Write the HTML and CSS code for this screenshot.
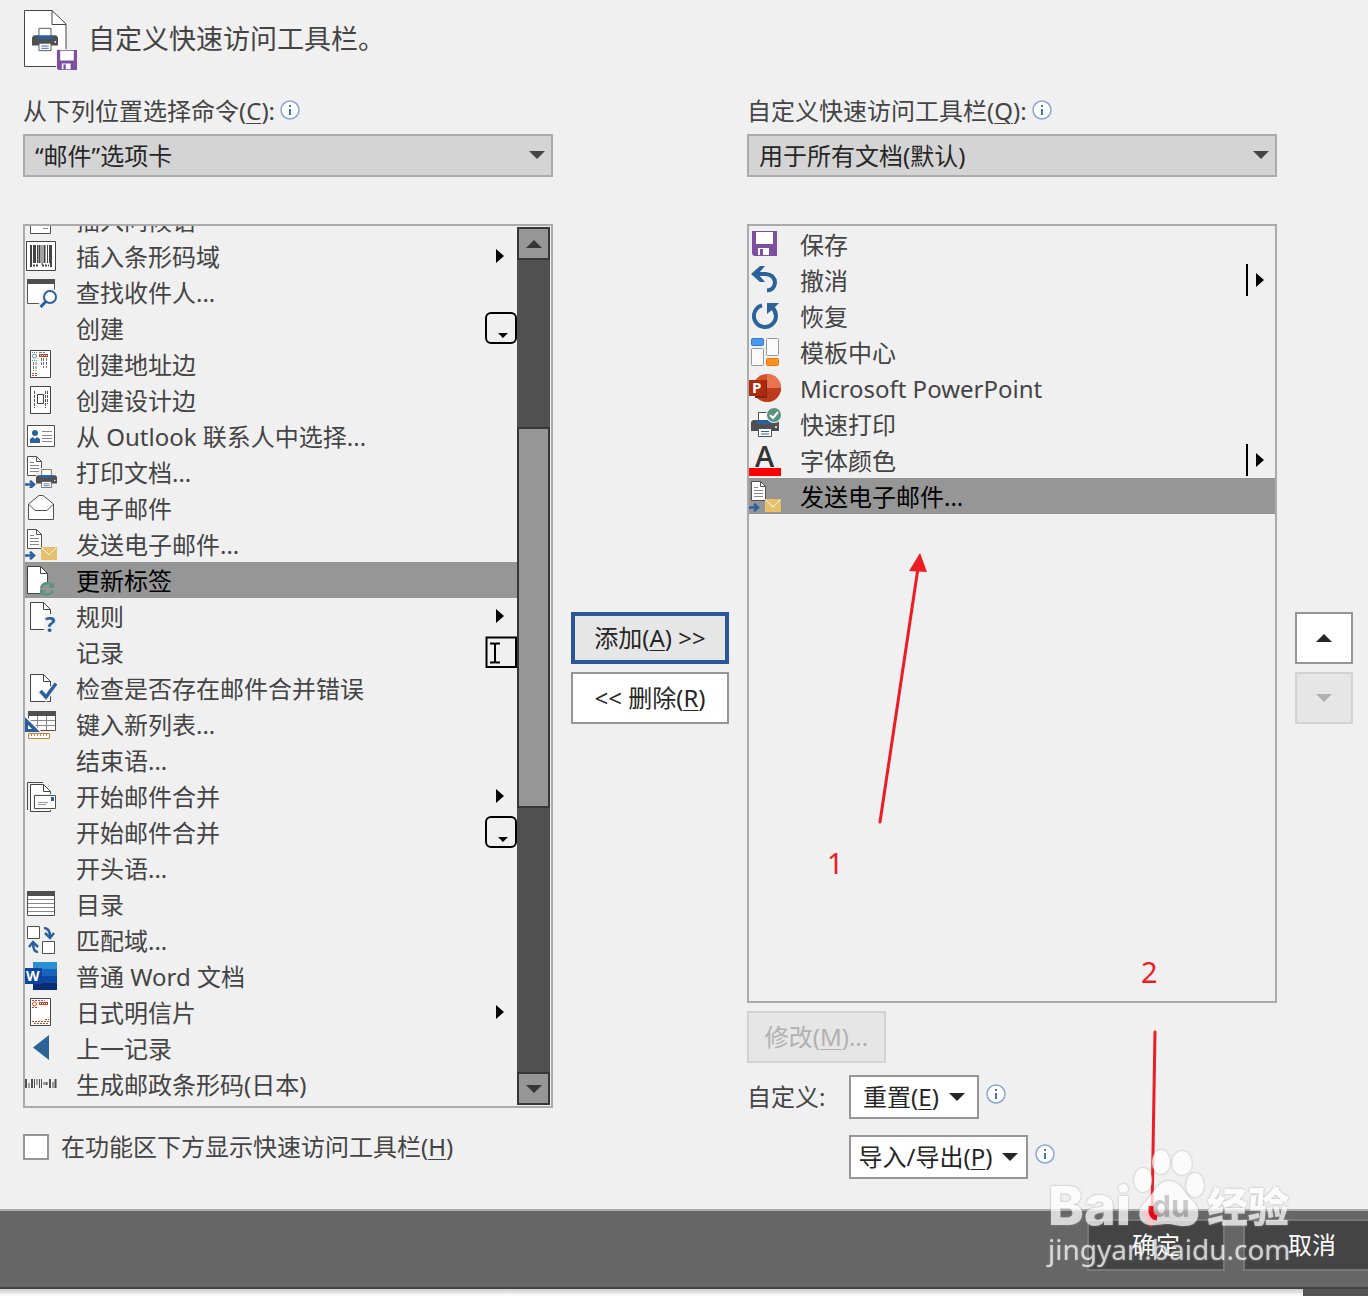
FILE: index.html
```html
<!DOCTYPE html>
<html lang="zh-Hans">
<head>
  <meta charset="UTF-8">
  <meta name="viewport" content="width=device-width, initial-scale=1.0">
  <title>自定义快速访问工具栏</title>
  <link rel="stylesheet" href="styles.css">
</head>
<body>
  <svg class="sprite" aria-hidden="true">
    <!-- shared parts -->
    <symbol id="page" viewBox="0 0 21 28"><path d="M.5 .5H13.500L20.500 7.500V27.500H.5z" fill="#fff" stroke="#444"/><path d="M13.500 .5V7.500H20.500" fill="none" stroke="#444"/></symbol>
    <symbol id="printer" viewBox="0 0 28 25">
      <path d="M2 8H26L28 10V19H0V10z" fill="#505050"/>
      <path d="M7.500 .5H20.500V9H7.500z" fill="#fff" stroke="#505050"/>
      <path d="M6 8H22V12H6z" fill="#2b5f9e"/>
      <path d="M7.500 16.500H20.500V24.500H7.500z" fill="#fff" stroke="#505050"/>
      <path d="M10 19.500H18M10 22H18" stroke="#2b5f9e"/><circle cx="25" cy="15" r="1" fill="#fff"/>
    </symbol>
    <symbol id="floppy" viewBox="0 0 25 25"><path d="M0 0H25V25H2L0 23z" fill="#7e4fa0"/><path d="M4 1H21V13H4zM6 17H17V24H6z" fill="#fff"/><path d="M8 18H11V24H8z" fill="#7e4fa0"/></symbol>
    <symbol id="textpage" viewBox="0 0 15 20"><path d="M.5 .5H9.500L14.500 5.500V19.500H.5z" fill="#fff" stroke="#505050"/><path d="M9.500 .5V5.500H14.500" fill="none" stroke="#505050"/><path d="M3 6.500H7M3 9.500H12M3 12.500H12M3 15.500H12" stroke="#888"/></symbol>
    <symbol id="arrow" viewBox="0 0 11 9"><path d="M0 4.500H9M5 .8L9 4.500L5 8.200" fill="none" stroke="#2b5f9e" stroke-width="2.500"/></symbol>

    <!-- command icons -->
    <symbol id="i-greeting" viewBox="0 0 32 32"><path d="M5.500 2.500H25.500V29.500H5.500z" fill="#fff" stroke="#505050"/><path d="M18 24.500H23" stroke="#888"/></symbol>
    <symbol id="i-barcode" viewBox="0 0 32 32"><path d="M1.500 1.500H30.500V30.500H1.500z" fill="#fff" stroke="#444"/><path d="M6 5V27M10 5V23M14.500 5V23M19.500 5V23M26 5V27" stroke="#444" stroke-width="2"/><path d="M8.500 5V23M12.500 5V23M17 5V25M22.500 5V23M24.500 5V23" stroke="#444"/><path d="M8 25.500H14M17 25.500H24" stroke="#444" stroke-width="2" stroke-dasharray="2 1"/></symbol>
    <symbol id="i-find" viewBox="0 0 32 32"><path d="M2.500 3.500H29.500V27.500H2.500z" fill="#fff" stroke="#505050"/><path d="M2 3H30V8H2z" fill="#505050"/><circle cx="25" cy="21" r="9" fill="#f0f0f0"/><path d="M13 28L18 25L20 29L17 32z" fill="#f0f0f0"/><circle cx="25" cy="21" r="6" fill="#fff" stroke="#2b5f9e" stroke-width="2"/><path d="M21 25.500L15.500 31" stroke="#2b5f9e" stroke-width="3"/></symbol>
    <symbol id="i-address" viewBox="0 0 32 32"><path d="M5.500 2.500H25.500V29.500H5.500z" fill="#fff" stroke="#444"/><circle cx="9.500" cy="8" r="2" fill="none" stroke="#5a9480"/><path d="M7 4.500H13M7 12.500H13" stroke="#5a9480" stroke-dasharray="1 1"/><path d="M14 4.500H20M8.500 14V23M11 14V23M16.500 10V18M18.500 10V20M21.500 10V20" stroke="#777" stroke-dasharray="3 1"/><path d="M14 7.500H23" stroke="#c5472b" stroke-width="3"/><path d="M15 7.500H22" stroke="#fff" stroke-dasharray="1 1"/><path d="M7 25.500H12M7 27.500H12" stroke="#c5472b" stroke-dasharray="2 1"/></symbol>
    <symbol id="i-design" viewBox="0 0 32 32"><path d="M5.500 2.500H25.500V29.500H5.500z" fill="#fff" stroke="#444"/><path d="M12.500 10.500H18.500V19.500H12.500z" fill="none" stroke="#444"/><path d="M9.500 7V24M20.500 7V24M22.500 7V20" stroke="#555" stroke-dasharray="3 1"/></symbol>
    <symbol id="i-contact" viewBox="0 0 32 32"><path d="M2.500 5.500H29.500V26.500H2.500z" fill="#fff" stroke="#505050"/><circle cx="10" cy="13" r="3" fill="#2b5f9e"/><path d="M5 23V19L8 17L10 19L12 17L15 19V23z" fill="#2b5f9e"/><path d="M17 11.500H27M17 15.500H27M17 18.500H27M17 21.500H27" stroke="#888"/></symbol>
    <symbol id="i-printdoc" viewBox="0 0 32 32"><use href="#textpage" x="2" y="0" width="15" height="20"/><path d="M14 12H28V20H11V16H14z" fill="#f0f0f0"/><use href="#printer" x="11" y="13" width="21" height="19"/><use href="#arrow" x="0" y="24" width="11" height="9"/></symbol>
    <symbol id="i-mail" viewBox="0 0 32 32"><path d="M3.500 12L14 3.500H18L28.500 12V27.500H3.500z" fill="#fff" stroke="#505050"/><path d="M3.500 12L10 18.500H22L28.500 12" fill="none" stroke="#505050"/></symbol>
    <symbol id="i-send" viewBox="0 0 32 32"><use href="#textpage" x="2" y="1" width="15" height="20"/><path d="M16 19H32V32H16z" fill="#e6c06b"/><path d="M17 20L24 27L31 20" fill="none" stroke="#fff"/><use href="#arrow" x="0" y="23" width="11" height="9"/></symbol>
    <symbol id="i-update" viewBox="0 0 32 32"><use href="#page" x="2" y="2" width="21" height="28"/><circle cx="22" cy="25" r="7" fill="#959595"/><path d="M16.500 24C17 19 23 18 26 21M27.500 26C27 31 20 32 17.500 28.500" fill="none" stroke="#5a9480" stroke-width="2.500"/><path d="M29 18V24H23zM15 32V26H21z" fill="#5a9480"/></symbol>
    <symbol id="i-rules" viewBox="0 0 32 32"><use href="#page" x="5" y="2" width="21" height="28"/><path d="M19 14H32V32H19z" fill="#f0f0f0"/><text x="20" y="32" class="glyph" font-size="22" fill="#2b5f9e">?</text></symbol>
    <symbol id="i-check" viewBox="0 0 32 32"><use href="#page" x="5" y="2" width="21" height="28"/><path d="M15 19L21 25.500L31 11.500" fill="none" stroke="#f0f0f0" stroke-width="6"/><path d="M15.500 19L21 25L31 11.500" fill="none" stroke="#2b5f9e" stroke-width="3.500"/></symbol>
    <symbol id="i-newlist" viewBox="0 0 32 32"><path d="M3.500 3.500H30.500V22.500H3.500z" fill="#fff" stroke="#505050"/><path d="M3 3H31V8H3z" fill="#505050"/><path d="M3 12.500H30M3 17.500H30M12.500 8V22M21.500 8V22" stroke="#888"/><path d="M0 7L17 24H0z" fill="#fff"/><path d="M0 9L15 24H0z" fill="#2b5f9e"/><path d="M3 17L7 21H3z" fill="#fff"/><path d="M3.500 25.500H24.500V30.500H3.500z" fill="#fff" stroke="#d57c32"/><path d="M6.500 25V28M9.500 25V28M12.500 25V28M15.500 25V28M18.500 25V28M21.500 25V28" stroke="#d57c32"/></symbol>
    <symbol id="i-merge" viewBox="0 0 32 32"><path d="M2.500 30V2.500H18" fill="none" stroke="#505050"/><use href="#page" x="5" y="4" width="21" height="28"/><path d="M8 14H32V30H8z" fill="#f0f0f0"/><path d="M9.500 15.500H30.500V28.500H9.500z" fill="#fff" stroke="#505050"/><path d="M26 17H29V21H26z" fill="#2b5f9e"/><path d="M13 22.500H23M13 24.500H21" stroke="#999"/></symbol>
    <symbol id="i-index" viewBox="0 0 32 32"><path d="M2.500 3.500H29.500V27.500H2.500z" fill="#fff" stroke="#505050"/><path d="M2 3H30V8H2z" fill="#505050"/><path d="M3 11.500H29M3 15.500H29M3 19.500H29M3 23.500H29" stroke="#888"/></symbol>
    <symbol id="i-match" viewBox="0 0 32 32"><path d="M2.500 2.500H14.500V14.500H2.500zM17.500 17.500H29.500V29.500H17.500z" fill="#fff" stroke="#505050"/><path d="M19 4Q25 4 25 13M20 9L25 14L29 9M13 28Q8 28 8 19M4 23L8 18L13 23" fill="none" stroke="#2b5f9e" stroke-width="2.500"/></symbol>
    <symbol id="i-word" viewBox="0 0 32 32"><path d="M8 2H32V9H8z" fill="#2b8fd8"/><path d="M8 9H32V16H8z" fill="#1a63bc"/><path d="M8 16H32V23H8z" fill="#0d48a2"/><path d="M8 23H32V30H8z" fill="#082d73"/><path d="M0 8H17V24H0z" fill="#0b45a0"/><text x="1" y="21" class="glyph" font-size="14" fill="#fff">W</text></symbol>
    <symbol id="i-postcard" viewBox="0 0 32 32"><path d="M5.500 2.500H25.500V29.500H5.500z" fill="#fff" stroke="#444"/><circle cx="9.500" cy="8" r="2" fill="none" stroke="#c5472b"/><path d="M7 4.500H20M7 11.500H13M7 25.500H24M9 27.500H24M20 23.500H24" stroke="#c5472b" stroke-dasharray="2 1"/><path d="M14 7.500H23" stroke="#c5472b" stroke-width="3"/><path d="M15 7.500H22" stroke="#fff" stroke-dasharray="1 1"/></symbol>
    <symbol id="i-prev" viewBox="0 0 32 32"><path d="M24 3V28L8 15.500z" fill="#2b6298"/></symbol>
    <symbol id="i-postal" viewBox="0 0 32 32"><path d="M1 11V20M7 11V20M21.500 14V17M25 11V20M30.500 11V20" stroke="#505050" stroke-width="2"/><path d="M4 15V20M9.500 11V20M12 11V17M14.500 11V20M16.500 11V20M19 14V17M28 14V20" stroke="#505050"/></symbol>
    <symbol id="i-save" viewBox="0 0 32 32"><use href="#floppy" x="3" y="3" width="25" height="25"/></symbol>
    <symbol id="i-undo" viewBox="0 0 32 32"><path d="M5 10H17Q26 11 26 19Q25 26 18 26.500" fill="none" stroke="#2b6298" stroke-width="4"/><path d="M2 10L11 2H16L9 10L16 18H11z" fill="#2b6298"/></symbol>
    <symbol id="i-redo" viewBox="0 0 32 32"><path d="M13 5.400A11 11 0 1 0 23.500 8" fill="none" stroke="#2b6298" stroke-width="4"/><path d="M18 3H30L26 7L27 11L24 9L18 14z" fill="#2b6298"/></symbol>
    <symbol id="i-template" viewBox="0 0 32 32"><rect x="2.500" y="2.500" width="12" height="7" rx="1" fill="#4a98e8" stroke="#2b7cd3"/><rect x="17.500" y="2.500" width="12" height="17" rx="1" fill="#fafafa" stroke="#999"/><rect x="2.500" y="12.500" width="12" height="17" rx="1" fill="#fafafa" stroke="#999"/><rect x="17.500" y="22.500" width="12" height="7" rx="1" fill="#ff9020" stroke="#e87a10"/></symbol>
    <symbol id="i-ppt" viewBox="0 0 32 32"><circle cx="18" cy="16" r="14" fill="#d35230"/><path d="M18 2A14 14 0 0 1 32 16H18z" fill="#e97450"/><path d="M4 16H32A14 14 0 0 1 4 16" fill="#bd3b1b"/><path d="M6 8H18V26H6z" fill="#7d2410"/><path d="M0 8H17V24H0z" fill="#ad2b0c"/><text x="3" y="21" class="glyph" font-size="15" fill="#fff">P</text></symbol>
    <symbol id="i-quickprint" viewBox="0 0 32 32"><use href="#printer" x="2" y="4" width="28" height="25"/><circle cx="25" cy="7" r="8" fill="#f0f0f0"/><circle cx="25" cy="7" r="7" fill="#5a9480"/><path d="M21 7L24 10L29 4" fill="none" stroke="#fff" stroke-width="2"/></symbol>
    <symbol id="i-fontcolor" viewBox="0 0 32 32"><text x="6" y="23" class="glyph glyph-a" font-size="29" fill="#333">A</text><path d="M0 24H32V32H0z" fill="#f00"/></symbol>

    <!-- marks at the right end of a row -->
    <symbol id="m-sub" viewBox="0 0 32 32"><path d="M11 9L19 16L11 23z"/></symbol>
    <symbol id="m-split" viewBox="0 0 32 32"><path d="M3 0H5V32H3zM13 9L21 16L13 23z"/></symbol>
    <symbol id="m-gallery" viewBox="0 0 32 32"><rect x="1" y="1" width="30" height="30" rx="5" fill="none" stroke="#000" stroke-width="2"/><path d="M13 21H23L18 26z"/></symbol>
    <symbol id="m-edit" viewBox="0 0 32 32"><path d="M1.500 31V1.500H31V31z" fill="none" stroke="#000" stroke-width="2"/><path d="M5 7.500H9L10 9L11 7.500H15M5 26.500H9L10 25L11 26.500H15M10 9V25" fill="none" stroke="#000" stroke-width="2"/></symbol>
    <symbol id="info" viewBox="0 0 20 20"><circle cx="10" cy="10" r="9" fill="#fff" stroke="#88a7d7" stroke-width="1.500"/><path d="M9 5H11V7H9zM9 9H11V15H9z" fill="#4d74ad"/></symbol>
  </svg>

  <div class="page">
    <header class="title-bar">
      <svg class="title-icon" viewBox="0 0 54 60" aria-hidden="true">
        <path d="M.5 .5H28L42 14V56.500H.5z" fill="#fff" stroke="#444"/><path d="M28 .5V14.500H42" fill="none" stroke="#444"/>
        <use href="#printer" x="8" y="17" width="26" height="25"/>
        <path d="M32 39H54V60H32z" fill="#f0f0f0"/><use href="#floppy" x="33" y="40" width="20" height="20"/>
      </svg>
      <h1>自定义快速访问工具栏。</h1>
    </header>

    <main class="layout">
      <section class="column">
        <div class="label-row"><label for="source">从下列位置选择命令(<u>C</u>):</label><svg class="info"><use href="#info"/></svg></div>
        <div class="select-box">
          <select id="source"><option>“邮件”选项卡</option></select>
        </div>
        <div class="list list-commands">
          <ul class="items">
            <li><svg><use href="#i-greeting"/></svg><span>插入问候语</span></li>
            <li><svg><use href="#i-barcode"/></svg><span>插入条形码域</span><svg><use href="#m-sub"/></svg></li>
            <li><svg><use href="#i-find"/></svg><span>查找收件人...</span></li>
            <li><svg></svg><span>创建</span><svg><use href="#m-gallery"/></svg></li>
            <li><svg><use href="#i-address"/></svg><span>创建地址边</span></li>
            <li><svg><use href="#i-design"/></svg><span>创建设计边</span></li>
            <li><svg><use href="#i-contact"/></svg><span>从 Outlook 联系人中选择...</span></li>
            <li><svg><use href="#i-printdoc"/></svg><span>打印文档...</span></li>
            <li><svg><use href="#i-mail"/></svg><span>电子邮件</span></li>
            <li><svg><use href="#i-send"/></svg><span>发送电子邮件...</span></li>
            <li class="selected"><svg><use href="#i-update"/></svg><span>更新标签</span></li>
            <li><svg><use href="#i-rules"/></svg><span>规则</span><svg><use href="#m-sub"/></svg></li>
            <li><svg></svg><span>记录</span><svg><use href="#m-edit"/></svg></li>
            <li><svg><use href="#i-check"/></svg><span>检查是否存在邮件合并错误</span></li>
            <li><svg><use href="#i-newlist"/></svg><span>键入新列表...</span></li>
            <li><svg></svg><span>结束语...</span></li>
            <li><svg><use href="#i-merge"/></svg><span>开始邮件合并</span><svg><use href="#m-sub"/></svg></li>
            <li><svg></svg><span>开始邮件合并</span><svg><use href="#m-gallery"/></svg></li>
            <li><svg></svg><span>开头语...</span></li>
            <li><svg><use href="#i-index"/></svg><span>目录</span></li>
            <li><svg><use href="#i-match"/></svg><span>匹配域...</span></li>
            <li><svg><use href="#i-word"/></svg><span>普通 Word 文档</span></li>
            <li><svg><use href="#i-postcard"/></svg><span>日式明信片</span><svg><use href="#m-sub"/></svg></li>
            <li><svg><use href="#i-prev"/></svg><span>上一记录</span></li>
            <li><svg><use href="#i-postal"/></svg><span>生成邮政条形码(日本)</span></li>
          </ul>
          <div class="scrollbar">
            <button class="scroll-btn" aria-label="向上滚动"><i class="tri up"></i></button>
            <div class="track"><div class="thumb"></div></div>
            <button class="scroll-btn" aria-label="向下滚动"><i class="tri down"></i></button>
          </div>
        </div>
        <div class="check-row">
          <input type="checkbox" id="below"><label for="below">在功能区下方显示快速访问工具栏(<u>H</u>)</label>
        </div>
      </section>

      <div class="side transfer">
        <button class="btn primary">添加(<u>A</u>) &gt;&gt;</button>
        <button class="btn">&lt;&lt; 删除(<u>R</u>)</button>
      </div>

      <section class="column">
        <div class="label-row"><label for="target">自定义快速访问工具栏(<u>Q</u>):</label><svg class="info"><use href="#info"/></svg></div>
        <div class="select-box">
          <select id="target"><option>用于所有文档(默认)</option></select>
        </div>
        <div class="list list-toolbar">
          <ul class="items">
            <li><svg><use href="#i-save"/></svg><span>保存</span></li>
            <li><svg><use href="#i-undo"/></svg><span>撤消</span><svg><use href="#m-split"/></svg></li>
            <li><svg><use href="#i-redo"/></svg><span>恢复</span></li>
            <li><svg><use href="#i-template"/></svg><span>模板中心</span></li>
            <li><svg><use href="#i-ppt"/></svg><span>Microsoft PowerPoint</span></li>
            <li><svg><use href="#i-quickprint"/></svg><span>快速打印</span></li>
            <li><svg><use href="#i-fontcolor"/></svg><span>字体颜色</span><svg><use href="#m-split"/></svg></li>
            <li class="selected"><svg><use href="#i-send"/></svg><span>发送电子邮件...</span></li>
          </ul>
        </div>
        <button class="btn modify" disabled>修改(<u>M</u>)...</button>
        <div class="custom">
          <span class="custom-label">自定义:</span>
          <div class="custom-menus">
            <div class="menu-row"><button class="menu-btn reset"><span>重置(<u>E</u>)</span><i class="tri down"></i></button><svg class="info"><use href="#info"/></svg></div>
            <div class="menu-row"><button class="menu-btn export"><span>导入/导出(<u>P</u>)</span><i class="tri down"></i></button><svg class="info"><use href="#info"/></svg></div>
          </div>
        </div>
      </section>

      <div class="side order">
        <button class="btn" aria-label="上移"><i class="tri up"></i></button>
        <button class="btn" aria-label="下移" disabled><i class="tri down"></i></button>
      </div>
    </main>

    <footer class="footer">
      <button class="foot-btn">确定</button>
      <button class="foot-btn">取消</button>
    </footer>
    <div class="below-dialog"><div class="sheet"></div></div>

    <!-- notes drawn over the dialog -->
    <svg class="notes" width="1368" height="1296" aria-hidden="true">
      <g fill="#ed1c24" stroke="#ed1c24">
        <path d="M880 822L918 568M1155 1032L1152 1212" stroke-width="3" stroke-linecap="round"/>
        <path d="M920 553L909 571L927 572z" stroke="none"/>
        <path d="M1142 1211L1161 1212L1151 1228z" stroke="none"/>
      </g>
      <text x="827" y="874">1</text>
      <text x="1141" y="983">2</text>
    </svg>
    <div class="watermark">
      <div class="brand">
        <span class="bai">Bai</span>
        <svg class="paw" width="74" height="78" viewBox="0 0 74 78" aria-hidden="true">
          <g fill="#fff">
            <ellipse cx="10" cy="31" rx="9" ry="12"/><ellipse cx="28" cy="13" rx="9" ry="12"/><ellipse cx="49" cy="14" rx="10" ry="12"/><ellipse cx="62" cy="36" rx="9" ry="12"/>
            <path d="M36 32C48 32 50 44 60 52C68 60 68 77 52 77C42 77 42 75 34 75C26 75 22 77 16 76C4 74 4 60 12 53C20 46 24 32 36 32z"/>
          </g>
          <text x="19" y="68">du</text>
          <path d="M18 57Q17 68 24 69" fill="none" stroke="#e30010" stroke-width="5"/>
        </svg>
        <span class="jy">经验</span>
      </div>
      <div class="site">jingyan.baidu.com</div>
    </div>
  </div>
</body>
</html>
```
FILE: styles.css
```css
* {
  box-sizing: border-box;
}
body {
  margin: 0;
  background: #f0f0f0;
  color: #444;
  font-family: "Noto Sans", "Noto Sans CJK SC", sans-serif;
  font-size: 24px;
  line-height: 36px;
}
button,
select {
  font: inherit;
  color: #262626;
  margin: 0;
  cursor: pointer;
}
u {
  text-decoration-thickness: 1px;
  text-underline-offset: 3px;
}
.sprite {
  display: none;
}
.glyph {
  font-family: "Open Sans", sans-serif;
  font-weight: 700;
}
.glyph-a {
  font-weight: 600;
}
.page {
  position: relative;
  overflow: hidden;
}

/* title */
.title-bar {
  display: flex;
  gap: 10px;
  padding: 10px 24px 24px;
}
.title-icon {
  width: 54px;
  height: 60px;
}
.title-bar h1 {
  margin: 0;
  font-size: 27px;
  font-weight: 400;
  line-height: 58px;
}

/* columns */
.layout {
  display: flex;
  gap: 18px;
  padding: 0 15px 30px 23px;
}
.column {
  flex: 1;
  min-width: 0;
}
.side {
  display: flex;
  flex-direction: column;
  gap: 8px;
  padding-top: 518px;
}
.transfer {
  width: 158px;
}
.order {
  width: 58px;
}
.label-row {
  display: flex;
  gap: 5px;
  line-height: 34px;
  margin-bottom: 6px;
}
.info {
  width: 20px;
  height: 20px;
  margin-top: 6px;
}

.select-box {
  position: relative;
  margin-bottom: 47px;
}
.select-box select {
  display: block;
  appearance: none;
  width: 100%;
  height: 43px;
  padding: 0 10px;
  border: 2px solid #ababab;
  border-radius: 0;
  background: #d4d4d4;
}
.select-box::after {
  content: "";
  position: absolute;
  right: 8px;
  top: 17px;
  border: 8px solid transparent;
  border-top-color: #444;
  border-bottom: 0;
  pointer-events: none;
}

/* lists */
.list {
  display: flex;
  border: 2px solid #ababab;
}
.list-commands {
  height: 884px;
}
.list-toolbar {
  height: 779px;
}
.items {
  flex: 1;
  display: flex;
  flex-direction: column;
  margin: 0;
  padding: 0;
  list-style: none;
  overflow: hidden;
}
.list-commands .items {
  justify-content: flex-end;
  padding-bottom: 4px;
}
.items li {
  display: flex;
  flex: none;
  align-items: center;
  height: 36px;
}
.items svg {
  width: 32px;
  height: 32px;
}
.items span {
  flex: 1;
  padding: 2px 0 0 19px;
  white-space: nowrap;
}
.items .selected {
  background: #969696;
  color: #000;
}

.scrollbar {
  display: flex;
  flex-direction: column;
  width: 33px;
  margin: 1px 1px 1px 0;
}
.scroll-btn,
.thumb {
  border: 2px solid #363636;
  background: #969696;
}
.scroll-btn {
  display: flex;
  align-items: center;
  justify-content: center;
  height: 33px;
  padding: 0;
}
.scroll-btn .tri {
  color: #363636;
}
.track {
  flex: 1;
  padding-top: 167px;
  background: #505050;
}
.thumb {
  height: 381px;
}

.tri {
  display: inline-block;
  border: 8px solid transparent;
}
.tri.up {
  border-bottom-color: currentColor;
  border-top: 0;
}
.tri.down {
  border-top-color: currentColor;
  border-bottom: 0;
}

/* buttons */
.btn {
  display: flex;
  align-items: center;
  justify-content: center;
  height: 52px;
  padding: 0;
  border: 2px solid #969696;
  background: #fff;
  white-space: pre;
}
.btn.primary {
  border: 4px solid #2b579a;
  background: #e6e6e6;
}
.btn:disabled {
  border-color: #d2d2d2;
  background: #e6e6e6;
  color: #b1b1b1;
}
.modify {
  width: 139px;
  margin: 8px 0 12px;
}
.custom {
  display: flex;
}
.custom-label {
  width: 102px;
  line-height: 44px;
}
.custom-menus {
  display: flex;
  flex-direction: column;
  gap: 16px;
}
.menu-row {
  display: flex;
  gap: 7px;
}
.menu-row .info {
  margin-top: 9px;
}
.menu-btn {
  display: flex;
  align-items: center;
  justify-content: center;
  gap: 10px;
  height: 44px;
  padding: 0;
  border: 2px solid #969696;
  background: #fff;
  white-space: nowrap;
}
.reset {
  width: 130px;
}
.export {
  width: 179px;
}

.check-row {
  display: flex;
  align-items: center;
  gap: 12px;
  margin-top: 21px;
}
.check-row input {
  appearance: none;
  width: 26px;
  height: 26px;
  margin: 0;
  border: 2px solid #969696;
  background: #fff;
}

/* footer */
.footer {
  display: flex;
  justify-content: flex-end;
  gap: 18px;
  height: 80px;
  padding-top: 8px;
  margin-right: -13px;
  border-top: 2px solid #ababab;
  border-bottom: 2px solid #444;
  background: #666;
}
.foot-btn {
  width: 138px;
  height: 52px;
  border: 2px solid #777;
  background: #444;
  color: #fff;
}
.below-dialog {
  height: 7px;
  padding-right: 65px;
  background: #555;
}
.sheet {
  height: 7px;
  background: linear-gradient(#ccc, #fff);
}

/* overlays */
.notes {
  position: absolute;
  left: 0;
  top: 0;
  pointer-events: none;
}
.notes text {
  font-size: 29px;
  fill: #ed1c24;
}
.watermark {
  position: absolute;
  left: 1048px;
  top: 1149px;
  color: #fff;
  opacity: 0.75;
  pointer-events: none;
  filter: drop-shadow(0 0 1px #999);
}
.brand {
  display: flex;
  height: 78px;
}
.bai {
  width: 85px;
  font: 800 54px/114px Inter, sans-serif;
}
.paw text {
  font: 700 30px Inter, sans-serif;
  fill: #bbb;
}
.jy {
  font: 900 41px/110px "Noto Sans CJK SC", sans-serif;
}
.site {
  font-size: 28px;
  line-height: 44px;
}
```
